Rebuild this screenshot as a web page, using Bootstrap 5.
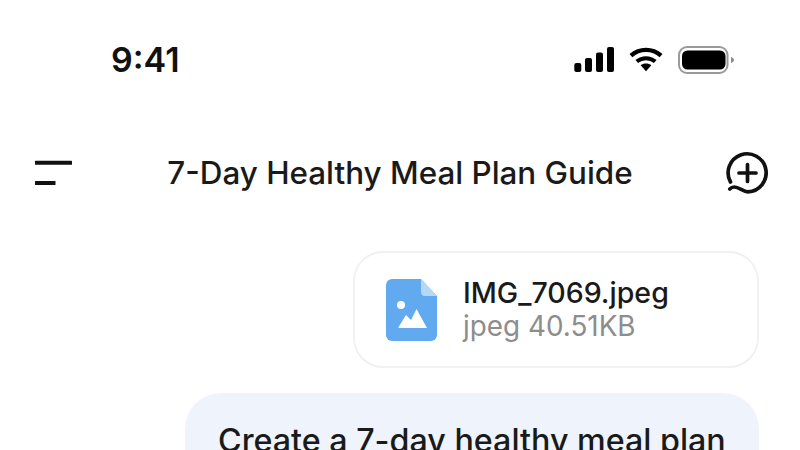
<!DOCTYPE html>
<html lang="en"><head><meta charset="utf-8"><title>Chat</title>
<link rel="stylesheet" href="https://cdn.jsdelivr.net/npm/bootstrap@5.3.0/dist/css/bootstrap.min.css">
<style>
html,body{height:450px;overflow:hidden;background:#fff}
body{font-family:Inter,"Liberation Sans",sans-serif;color:#111}
.phone{width:800px;height:450px;overflow:hidden}
.statusbar{height:120px;padding:0 66px 0 111px}
.clock{font-size:34px;font-weight:600;line-height:40px;color:#111}
.status-icons{gap:15px}
.chat-head{height:106px;padding:0 32px 0 34px}
.chat-title{font-size:31.400px;line-height:40px;font-weight:450;margin:0 0 0 2px;color:#1a1a1a}
.msgs{padding:25px 41px 0 0}
.file-card{width:406px;height:117px;border:2px solid #f1f1f1;border-radius:30px;padding:0 0 0 31px;gap:26px}
.file-name{font-size:28.550px;line-height:33px;font-weight:450;color:#1a1a1a;margin-top:-1px}
.file-meta{font-size:27.850px;line-height:33px;color:#8d8d8d;margin-top:1px}
.bubble{width:574px;height:140px;margin-top:25px;background:#eff4fc;border-radius:36px;padding:28px 30px 0 33px;font-size:32.250px;line-height:40px;font-weight:450;color:#1a1a1a;white-space:nowrap}
</style></head>
<body>
<div class="phone d-flex flex-column">
<div class="statusbar flex-shrink-0 d-flex align-items-center justify-content-between">
<span class="clock">9:41</span>
<div class="status-icons d-flex align-items-center">
<svg width="40" height="26" viewBox="0 0 40 26"><rect x="0.300" y="16" width="7" height="9" rx="2"/><rect x="11" y="11" width="7" height="14" rx="2"/><rect x="22" y="5.500" width="7" height="19.500" rx="2"/><rect x="33" y="0" width="7" height="25" rx="2"/></svg>
<svg width="34" height="26" viewBox="0 0 35 26"><path d="M2 8.500C11 .5 24 .5 33 8.500" fill="none" stroke="#000" stroke-width="4.400"/><path d="M8 14.600C13.500 10 21.500 10 27 14.600" fill="none" stroke="#000" stroke-width="4.200"/><path d="M12 18.500C15 15.800 20 15.800 23 18.500L17.500 24.500Z"/></svg>
<svg width="56" height="28" viewBox="0 0 56 28"><rect x="1" y="1" width="48.500" height="26" rx="8" fill="none" stroke="#9a9a9a" stroke-width="2"/><rect x="4" y="4.500" width="43.500" height="19" rx="5.500"/><path d="M53 11v6c1.500-.6 3-1.600 3-3S54.500 11.600 53 11z" fill="#8a8a8a"/></svg>
</div></div>
<div class="chat-head flex-shrink-0 d-flex align-items-center justify-content-between">
<svg width="38" height="26" viewBox="0 0 38 26"><rect x="1" y="0.800" width="37" height="4" rx=".5" fill="#111"/><rect x="1" y="21" width="20.500" height="4" rx=".5" fill="#111"/></svg>
<h1 class="chat-title">7-Day Healthy Meal Plan Guide</h1>
<svg width="42" height="44" viewBox="0 0 42 44" fill="none" stroke="#111" stroke-width="3.700" stroke-linecap="round"><path d="M4.500 31A19 19 0 1 1 22 40.800C17 40.800 13 35.800 8 36C6.500 36 5 36.800 3.800 38"/><path d="M13 22H30M21.500 13.500V30.500"/></svg>
</div>
<div class="msgs flex-shrink-0 d-flex flex-column align-items-end">
<div class="file-card flex-shrink-0 d-flex align-items-center">
<svg width="51" height="62" viewBox="0 0 51 62"><path d="M6 0H35L51 17V56A6 6 0 0 1 45 62H6A6 6 0 0 1 0 56V6A6 6 0 0 1 6 0Z" fill="#62aaef"/><path d="M35 0L51 17H39A4 4 0 0 1 35 13Z" fill="#b5d8f7"/><circle cx="15" cy="26" r="4" fill="#fff"/><path d="M12 49L20 36L25 41L30.500 30L41 49Z" fill="#fff"/></svg>
<div><div class="file-name">IMG_7069.jpeg</div><div class="file-meta">jpeg 40.51KB</div></div>
</div>
<div class="bubble flex-shrink-0">Create a 7-day healthy meal plan</div>
</div>
</div>
</body></html>
